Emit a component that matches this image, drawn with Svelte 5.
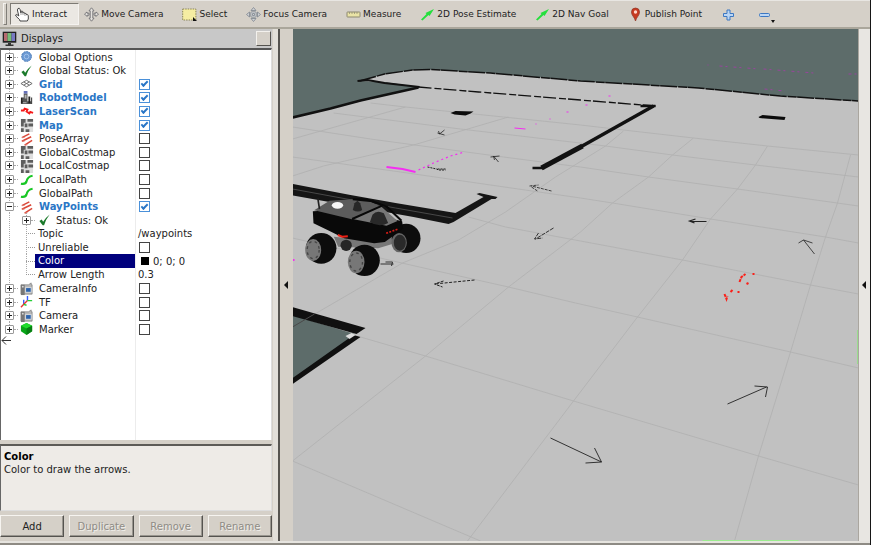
<script>
  const tools = [
    { name: 'Interact', icon: 'hand', active: true },
    { name: 'Move Camera', icon: 'move' },
    { name: 'Select', icon: 'select' },
    { name: 'Focus Camera', icon: 'focus' },
    { name: 'Measure', icon: 'measure' },
    { name: '2D Pose Estimate', icon: 'arrow' },
    { name: '2D Nav Goal', icon: 'arrow' },
    { name: 'Publish Point', icon: 'pin' }
  ];

  let rows = $state([
    { name: 'Global Options', icon: 'gear' },
    { name: 'Global Status: Ok', icon: 'check' },
    { name: 'Grid', icon: 'grid', on: true },
    { name: 'RobotModel', icon: 'robot', on: true },
    { name: 'LaserScan', icon: 'laser', on: true },
    { name: 'Map', icon: 'map', on: true },
    { name: 'PoseArray', icon: 'poses', on: false },
    { name: 'GlobalCostmap', icon: 'map', on: false },
    { name: 'LocalCostmap', icon: 'map', on: false },
    { name: 'LocalPath', icon: 'path', on: false },
    { name: 'GlobalPath', icon: 'path', on: false },
    { name: 'WayPoints', icon: 'poses', on: true, open: true },
    { name: 'Status: Ok', icon: 'check', level: 1 },
    { name: 'Topic', level: 2, value: '/waypoints' },
    { name: 'Unreliable', level: 2, on: false },
    { name: 'Color', level: 2, value: '0; 0; 0', swatch: true, selected: true },
    { name: 'Arrow Length', level: 2, value: '0.3', last: true },
    { name: 'CameraInfo', icon: 'camera', on: false },
    { name: 'TF', icon: 'tf', on: false },
    { name: 'Camera', icon: 'camera', on: false },
    { name: 'Marker', icon: 'cube', on: false, end: true }
  ]);

  const gridLines = [
    '370,103 405,107 503,117 580,125 623,130 693,138 767,146 858,155',
    '333,113 460,129 605,146 672,155 755,165 858,177',
    '292,127 370,139 503,157 580,167 648,177 737,189 858,206',
    '292,157 400,172 580,198 612,203 710,219 825,237 858,243',
    '468,217 505,227 580,241 682,260 810,285 858,294',
    '292,238 432,270 508,287 575,303 637,317 790,352 858,368',
    '360,337 425,356 573,401 758,456 858,485',
    '292,461 480,541',
    '405,107 292,139',
    '508,117 413,145 323,166 292,176',
    '623,131 605,146 555,177 505,212 458,240 402,263 292,327',
    '693,138 672,155 648,177 612,203 580,232 508,287 425,356 292,461',
    '767,146 755,165 737,189 710,219 682,260 637,317 573,401 467,541',
    '850,155 837,203 825,237 810,285 790,352 758,456 734,541'
  ];
</script>

{#snippet glyph(kind)}
  <svg class="icon" viewBox="0 0 15 15" aria-hidden="true">
    {#if kind === 'hand'}
      <path d="M3 1.5q1.5-.8 2 .8L6 6V4.5q1-1 1.800 0V6q1-1 2 0v.8q1-.8 1.800.2v.8q1.400-.6 1.700.8V12l-1 2H5l-.5-1.500L.8 9q-.5-1.500 1-1.500L3.800 9 2.400 3Z" fill="#fff" stroke="#333" stroke-width=".9" />
      <path d="M6 6v2M8 6v2M10 7v2" stroke="#666" stroke-width=".6" />
    {:else if kind === 'move'}
      <g fill="#e4e2de" stroke="#707074" stroke-width=".9">
        <path d="M7.500.8 10 3.800H8.800V11.200H10L7.500 14.200 5 11.200h1.200V3.800H5Z" />
        <path d="M.5 7 3 5v1.200h2v2H3v1.300ZM14.500 7 12 5v1.200h-2v2h2v1.300Z" />
      </g>
    {:else if kind === 'focus'}
      <g fill="#d0d2d4" stroke="#868c95" stroke-width=".9">
        <path d="M7.500.5 10 3.500H5ZM7.500 14.500 5 11.500h5ZM.5 7.500 3.500 5v5ZM14.500 7.500 11.500 10V5Z" />
        <rect x="4.800" y="4.800" width="5.400" height="5.400" rx="1" />
        <path d="M6.500 6.500h2v2h-2Z" />
      </g>
    {:else if kind === 'select'}
      <rect x=".7" y="2" width="13.200" height="11" fill="#f5eda2" stroke="#8b8557" stroke-dasharray="1.500 1" />
      <path d="m11 10 4 4h-4Z" fill="#111" />
    {:else if kind === 'measure'}
      <rect x="1" y="5" width="13" height="5" rx=".5" fill="#e9e3a6" stroke="#8c8871" />
      <path d="M3.500 5v2M6 5v2M8.500 5v2M11 5v2" stroke="#8c8871" stroke-width=".7" />
    {:else if kind === 'arrow'}
      <path d="m1 12.500 5.500-5.500L5.500 6l8.500-4-4.500 7-1-1-6 5.500Z" fill="#25df3d" />
    {:else if kind === 'pin'}
      <path d="M7.500 14C6.500 10 3.500 8.500 3.500 5a4 4 0 0 1 8 0c0 3.500-3 5-4 9Z" fill="#c73b22" stroke="#8e3422" stroke-width=".7" />
      <circle cx="7.500" cy="5" r="1.700" fill="#ffd7cb" />
    {:else if kind === 'plus'}
      <path d="M6 3h3v3.500h3.500v3H9V13H6V9.500H2.500v-3H6Z" fill="#bcd6f3" stroke="#3c78c3" />
    {:else if kind === 'minus'}
      <rect x="2.500" y="6.500" width="10" height="3" rx="1" fill="#bcd6f3" stroke="#3c78c3" />
    {:else if kind === 'screen'}
      <rect x=".7" y=".7" width="13.600" height="11" fill="#222" />
      <path d="M2 2h3.500v8H2Z" fill="#b66a70" /><path d="M5.500 2h4v8h-4Z" fill="#76bb77" /><path d="M9.500 2H13v8H9.500Z" fill="#7778c3" />
      <path d="M6 12h3v1.500h2.500V15h-8v-1.500H6Z" fill="#333" />
    {:else if kind === 'gear'}
      <circle cx="7" cy="7" r="5.300" fill="#6b99d3" stroke="#4777b4" stroke-dasharray="2 1" />
      <circle cx="7" cy="7" r="2.500" fill="none" stroke="#a2c3ec" />
    {:else if kind === 'check'}
      <path d="M1.500 8.500 4 7l1.500 2.500Q8 5 12.500 1.500 8.500 6.500 6.500 13H5Z" fill="#1b7a2b" />
    {:else if kind === 'grid'}
      <path d="m1 7 6-3.500L13 7l-6 3.500ZM4 5.300l6 3.400M4 8.700l6-3.400" fill="none" stroke="#666" />
    {:else if kind === 'robot'}
      <path d="M4 0h4v3H4Z" fill="#6670b8" />
      <path d="M4 3h4v8h4v3H1v-3h2V7h1Z" fill="#555" />
      <path d="M1 7h2v6H1ZM9 6h2v7H9ZM12 7h1v7h-1Z" fill="#222" />
      <path d="M3 12h4v1H3ZM5 4h2v4H5Z" fill="#b5b5b5" />
    {:else if kind === 'laser'}
      <path d="M1 7h3l1-2 3 1-1 2 3 2 1-1.500 3 1" fill="none" stroke="#f51818" stroke-width="2" />
    {:else if kind === 'map'}
      <path d="M1 1h13v14H1Z" fill="#dedede" />
      <path d="M1 1h5v4H4v4H1ZM8 1h6v3H8ZM1 11h3v4H1ZM5 6h3v4H5ZM9 6h5v3H9ZM6 12h4v3H6Z" fill="#5d5d5d" />
    {:else if kind === 'poses'}
      <path d="m2 6 8-4M2 10l10-5M5 14l8-5" fill="none" stroke="#da4839" stroke-width="1.700" />
      <path d="m2 6 3-.3M2 10l3-.3M5 14l3-.3" stroke="#e27c71" />
    {:else if kind === 'path'}
      <path d="M1 11.500q5 1 6-2.500 1-5 6.500-6" fill="none" stroke="#18c725" stroke-width="2.300" />
    {:else if kind === 'camera'}
      <path d="M1 3h8l3-2v2h1v10H1Z" fill="#b8b8b8" stroke="#777" stroke-width=".7" />
      <path d="M1 3h4v11H1Z" fill="#777" /><rect x="6" y="6" width="6" height="5" fill="#2b63ad" stroke="#ddd" />
      <circle cx="3" cy="5" r="1" fill="#ddd" />
    {:else if kind === 'tf'}
      <g fill="none" stroke-width="1.500"><path d="M4 10V5M8 6V1" stroke="#335cff" /><path d="m1 13 3-3 4-4" stroke="#ed3130" /><path d="m4 10 3 1M8 6h5" stroke="#26ce36" /></g>
    {:else if kind === 'cube'}
      <path d="m1 4 6-3 6 3v6l-6 4-6-4Z" fill="#09a518" /><path d="m1 4 6-3 6 3-6 3Z" fill="#20dc2c" /><path d="M7 7v7l6-4V4Z" fill="#087f13" />
    {/if}
  </svg>
{/snippet}

<div class="app">
  <header class="toolbar">
    <span class="grip"></span>
    {#each tools as tool}
      <button class="tool" class:active={tool.active}>{@render glyph(tool.icon)}<span>{tool.name}</span></button>
    {/each}
    <button class="tool bare" aria-label="Add tool">{@render glyph('plus')}</button>
    <button class="tool bare menu" aria-label="Remove tool">{@render glyph('minus')}</button>
  </header>

  <main>
    <aside class="dock">
      <div class="title">
        {@render glyph('screen')}
        <span>Displays</span>
        <button class="float" aria-label="Float panel"></button>
      </div>

      <div class="tree">
        <ul>
          {#each rows as row, i}
            <li>
              <div class="name level{row.level ?? 0}" class:last={row.last} class:end={row.end} class:enabled={row.on && !row.level}>
                {#if row.level === 2}
                  <span class="stub"></span>
                {:else}
                  <button class="expander" class:open={row.open} aria-label="Toggle {row.name}"></button>
                  <span class="dash"></span>
                  {@render glyph(row.icon)}
                {/if}
                {#if row.on !== undefined}
                  <label for="row{i}">{row.name}</label>
                {:else}
                  <span class="text" class:selected={row.selected}>{row.name}</span>
                {/if}
              </div>
              <div class="value">
                {#if row.on !== undefined}
                  <input type="checkbox" id="row{i}" bind:checked={row.on} />
                {/if}
                {#if row.swatch}<span class="swatch"></span>{/if}
                {#if row.value}<span>{row.value}</span>{/if}
              </div>
            </li>
          {/each}
        </ul>
        <svg class="pointer" viewBox="0 0 10 9" aria-hidden="true"><path d="M5 .5 1 4.500l4 4M1 4.500h9" fill="none" stroke="#333" /></svg>
      </div>

      <section class="help">
        <strong>Color</strong>
        <p>Color to draw the arrows.</p>
      </section>

      <div class="actions">
        <button>Add</button>
        <button disabled>Duplicate</button>
        <button disabled>Remove</button>
        <button disabled>Rename</button>
      </div>
    </aside>

    <button class="collapse left" aria-label="Hide left panel"><i></i></button>

    <svg class="scene" viewBox="292 29 566 512" preserveAspectRatio="xMidYMid slice" role="img" aria-label="3D view">
      <rect x="0" y="0" width="1200" height="900" fill="#5d6c6a" />
      <path d="M292 118 418 87 384 82 359 81 384 74 412 70 430 69.500 490 73 580 81 698 88 780 96 858 101V900H292Z" fill="#c1c1c1" />
      <g fill="none" stroke="#b0b0b0" stroke-width=".8">
        {#each gridLines as points}<polyline {points} />{/each}
      </g>

      <g fill="none" stroke="#111">
        <path d="M359 81 384 74 412 70 430 69.500 490 73 580 81 698 88 780 96 858 101" stroke-width="1.500" stroke-dasharray="17 1 9 .5" />
        <path d="m357 81 10-1 17 3 35 4" stroke-width="2" />
        <path d="m292 117.500 38-9 30-8 58-13" stroke-width="2.500" />
        <path d="m418 87 60 5 102 8 75 6" stroke-width="1.300" stroke-dasharray="13 3 7 2" />
        <path d="m653 106-73 41" stroke-width="3.500" />
        <path d="m582 146-41 22" stroke-width="5" />
        <path d="M532 168h12M640 106l15 0" stroke-width="2.500" />
      </g>
      <path d="m450 113 5-2 18 .5-3 2-5 2-11-1ZM758 117l4-2 23 2-1 3-13-1-12-1Z" fill="#0b0b0b" />

      <path d="m292 184 58 11 45 8 60 10 28-16-7-3 3-1 18 4-2 2-4 0-38 23-5 2-35-7-123-22Z" fill="#151515" />
      <path d="m292 189 103 19 57 10" fill="none" stroke="#555" stroke-width=".8" />

      <path d="m292 315 62 19-3 5-59 40Z" fill="#5d6c6a" />
      <path d="m292 307 73 21-9 6-64-18ZM353 335l7 2-68 47v-6Z" fill="#101010" />
      <path d="m345 336 6-3 4 2-6 4Z" fill="#ddd" />
      <path d="m292 327 22-13" stroke="#4a4a4a" />

      <!-- Rover, drawn at triple scale -->
      <g transform="translate(285 170) scale(.3333)">
        <path d="m145 200 45 5 55-5 75 0 8 20-50 15-120-5Z" fill="#777" />
        <ellipse cx="362" cy="205" rx="43" ry="44" fill="#0d0d0d" />
        <ellipse cx="341" cy="218" rx="23" ry="29" fill="#666" />
        <ellipse cx="343" cy="218" rx="18" ry="24" fill="#2a2a2a" />
        <path d="m82 124 118-6 150 36 3 22-55 40-32 4-90-15-50-25-42-20Z" fill="#090909" />
        <path d="m86 121 46-29 68-4 45 3 40 18-86 39Z" fill="#5c5c5c" />
        <path d="m286 109 50 44-33 14-102-20Z" fill="#777" />
        <path d="M200 147 292 106l-30-12-60-6 40 0 62 22 44 42" fill="none" stroke="#080808" stroke-width="6" />
        <path d="m102 117-5-32" stroke="#222" stroke-width="5" />
        <path d="m202 120 5-20 9-8 8 8 6 20q-12 9-28 0Z" fill="#272727" />
        <path d="m253 157 8-23q13-15 34-4l13 29q-26 14-55-2Z" fill="#292929" />
        <ellipse cx="156" cy="106" rx="17" ry="10" fill="#f7f7f7" />
        <path d="m157 195 13 5 17-1" fill="none" stroke="#ee2015" stroke-width="6" />
        <path d="m302 190 36-13" stroke="#d51d16" stroke-width="5" stroke-dasharray="6 4" />
        <circle cx="182" cy="226" r="17" fill="#252525" />
        <ellipse cx="107" cy="235" rx="46" ry="46" fill="#0c0c0c" />
        <ellipse cx="83" cy="240" rx="24" ry="33" fill="#777" />
        <ellipse cx="83" cy="240" rx="18" ry="26" fill="none" stroke="#444" stroke-width="4" stroke-dasharray="8 10" />
        <ellipse cx="237" cy="271" rx="46" ry="47" fill="#0c0c0c" />
        <ellipse cx="212" cy="276" rx="25" ry="34" fill="#777" />
        <ellipse cx="212" cy="276" rx="19" ry="27" fill="none" stroke="#444" stroke-width="4" stroke-dasharray="8 10" />
      </g>

      <g fill="none" stroke="#222">
        <path d="m474 280-40 4" stroke-dasharray="3 1.500" /><path d="m443 281-9 3 8 3" stroke-dasharray="3 1" />
        <path d="M380 264h13M385 262h7l-1 4" stroke-width=".9" />
        <path d="m444 130-5 4-1-3M437 133l7 2" stroke-width=".8" />
        <path d="m498 162-5-6 1 4M490 157l9-1" stroke-width=".8" />
        <path d="m427 167 9 2 2 1h7M437 169h8" stroke-dasharray="2 1" />
        <path d="m551 191-20-5M529 186l9-1M531 187l6 4" stroke-width=".8" stroke-dasharray="3 1" />
        <path d="m553 228-18 11M538 233l-4 6 8-1" stroke-width=".9" stroke-dasharray="4 1" />
        <path d="M706 221.500H689M695 219l-6 2 5 2" stroke-width="1.200" />
        <path d="m814 254-11-14M798 243l5-3 9 3" stroke-width=".8" />
        <path d="m727 404 39-17M754 386l13 1-2 10" stroke-width=".9" />
        <path d="m550 438 51 24M594 448l7 14-16 1" stroke-width=".9" />
      </g>

      <g fill="none" stroke="#f42ef1">
        <path d="m386 167 16 2 13 3" stroke-width="2" />
        <path d="m418 170 15-7 17-7 14-4" stroke-width="1.200" stroke-dasharray="2 3" />
        <path d="m514 128 11 1M535 124h1M549 119h1M566 112h2M608 96h2M585 105h2" stroke-width="1.200" />
        <path d="m707 65 1 0M719 66l40 3M763 69l50 4M764 89l20 2M848 74h8" stroke="#a63ba8" stroke-width=".8" stroke-dasharray="3 3 2 6" />
        <path d="M292 260h2" stroke-width="2" />
      </g>
      <g fill="none" stroke="#fa2019" stroke-width="2">
        <path d="m739 282 2-5 4-3M752 274h2M746 284l2-1M730 292l2-2M737 292h2M724 294l2 5 1-3" stroke-dasharray="3 1" />
      </g>
      <path d="M857.500 330v34" stroke="#72f65b" />
      <path d="M702 540.500h96" stroke="#9ced8f" />
    </svg>

    <button class="collapse right" aria-label="Hide right panel"><i></i></button>
  </main>
</div>

<style>
  :global(body) { background: #d5d0c8; }
  .app {
    box-sizing: border-box;
    height: 100vh;
    min-height: 480px;
    display: flex;
    flex-direction: column;
    font: 10px/13px "DejaVu Sans", sans-serif;
    color: #222;
    background: #d5d0c8;
    border-right: 1px solid #161616;
    overflow: hidden;
  }
  button { font: inherit; color: inherit; margin: 0; padding: 0; border: 0; background: none; }
  .icon { display: block; width: 15px; height: 15px; flex: none; }

  .toolbar {
    display: flex;
    align-items: stretch;
    height: 29px;
    box-sizing: border-box;
    padding: 2px 2px 2px 3px;
    border-bottom: 2px solid #aaa69b;
    border-top: 1px solid #e8e6e2;
    font-size: 9px;
  }
  .grip { width: 4px; margin-right: 3px; border: 1px solid; border-color: #f4f2ee #817e78 #817e78 #f4f2ee; box-sizing: border-box; }
  .tool { display: flex; align-items: center; gap: 2px; padding: 0 12px 0 5px; margin-right: 2px; white-space: nowrap; }
  .tool.active { padding: 0 11px 0 4px; margin-right: 0; background: #ebe8e3; border: 1px solid; border-color: #7d7a74 #f5f3f0 #f5f3f0 #7d7a74; }
  .bare { padding-right: 14px; }
  .menu { position: relative; padding-right: 5px; }
  .menu::after { content: ""; position: absolute; left: 19px; bottom: 2px; border: 2px solid transparent; border-top: 3px solid #111; border-bottom: 0; }

  main { flex: 1; min-height: 0; display: flex; border-bottom: 2px solid #8e8b84; box-shadow: inset 0 -2px #e6e4df; padding-bottom: 2px; }
  .dock { width: 272px; flex: none; display: flex; flex-direction: column; padding-right: 1px; }
  .title { height: 19px; box-sizing: border-box; display: flex; align-items: center; gap: 4px; padding: 0 1px 1px 2px; background: #c8c8c8; }
  .float { width: 15px; height: 15px; margin-left: auto; background: #d5d0c8; border: 1px solid; border-color: #f3f1ed #55534f #55534f #f3f1ed; }
  .tree {
    flex: 1;
    min-height: 0;
    overflow: hidden;
    border-top: 2px solid #555;
    border-left: 1px solid #666;
    border-right: 1px solid #ddd;
    background: linear-gradient(90deg, transparent 134px, #ececec 134px 135px, transparent 135px) #fff;
  }
  ul { list-style: none; margin: 0; padding: 0; height: 286px; display: grid; grid-auto-rows: 1fr; }
  li { display: grid; grid-template-columns: 134px 1fr; min-height: 0; }
  .name { display: flex; align-items: center; padding-left: 4px; white-space: nowrap; background: repeating-linear-gradient(#aaa 0 1px, #fff 1px 2px) 8px 0 / 1px 100% no-repeat; }
  .name.end { background-size: 1px 50%; }
  .name .icon { width: 14px; height: 14px; margin-right: 5px; }
  .level1 { padding-left: 21px; }
  .level1 .icon { margin-right: 4px; }
  .level2 { padding-left: 25px; }
  .level1, .level2 { background: repeating-linear-gradient(#aaa 0 1px, #fff 1px 2px) 8px 0 / 1px 100% no-repeat, repeating-linear-gradient(#aaa 0 1px, #fff 1px 2px) 25px 0 / 1px 100% no-repeat; }
  .level2.last { background-size: 1px 100%, 1px 50%; }
  .expander {
    width: 9px;
    height: 9px;
    box-sizing: border-box;
    flex: none;
    border: 1px solid #999;
    border-radius: 1px;
    background: linear-gradient(#222, #222) center / 5px 1px no-repeat, linear-gradient(#222, #222) center / 1px 5px no-repeat #fff;
  }
  .expander.open { background: linear-gradient(#222, #222) center / 5px 1px no-repeat #fff; }
  .dash { width: 4px; margin-right: 2px; border-top: 1px dotted #aaa; }
  .level1 .dash { margin-right: 3px; }
  .stub { width: 9px; border-top: 1px dotted #999; }
  .level2 label, .level2 .text { flex: 1; align-self: stretch; padding-left: 3px; }
  .selected { background: #00007c; color: #fff; }
  .enabled label { color: #2a76c6; font-weight: bold; }
  .value { display: flex; align-items: center; padding-left: 3px; gap: 4px; }
  .swatch { width: 8px; height: 8px; background: #000; margin-left: 3px; }
  input {
    appearance: none;
    box-sizing: border-box;
    width: 11px;
    height: 11px;
    margin: 0 0 0 1px;
    border: 1px solid #444;
    background: #fff;
  }
  input:checked { border-color: #4a90d9; display: grid; place-items: center; }
  input:checked::after { content: ""; width: 5px; height: 2px; border: solid #2a76c6; border-width: 0 0 2px 2px; transform: translateY(-1px) rotate(-45deg); }
  .pointer { display: block; width: 10px; height: 9px; }

  .help { height: 67px; box-sizing: border-box; margin-top: 4px; padding: 4px 3px; background: #eeebe7; border: 1px solid #666; border-top: 2px solid #5d5b57; border-right-color: #ddd; border-bottom-color: #ddd; }
  .help strong { display: block; color: #000; }
  .help p { margin: 0; }
  .actions { display: flex; gap: 5px; padding: 4px 0 4px 0; }
  .actions button { flex: 1 1 0; height: 22px; box-sizing: border-box; border: 1px solid; border-color: #f6f4f0 #55534f #55534f #f6f4f0; box-shadow: inset -1px -1px #99968f; }
  .actions button:disabled { color: #8f8c86; text-shadow: 1px 1px #f0eeea; }

  .collapse { flex: none; display: flex; align-items: center; justify-content: center; }
  .collapse i { border: 4px solid transparent; border-right: 4px solid #111; border-left: 0; }
  .left { width: 20px; padding-left: 5px; background: linear-gradient(90deg, #e2dfd9 0 5px, #55534f 5px 7px, #d5d0c8 7px); }
  .right { width: 12px; background: #e8e6e2; box-shadow: inset 1px 0 #aaa69f; }
  .scene { flex: 1; min-width: 0; width: 100%; height: 100%; display: block; }
</style>
